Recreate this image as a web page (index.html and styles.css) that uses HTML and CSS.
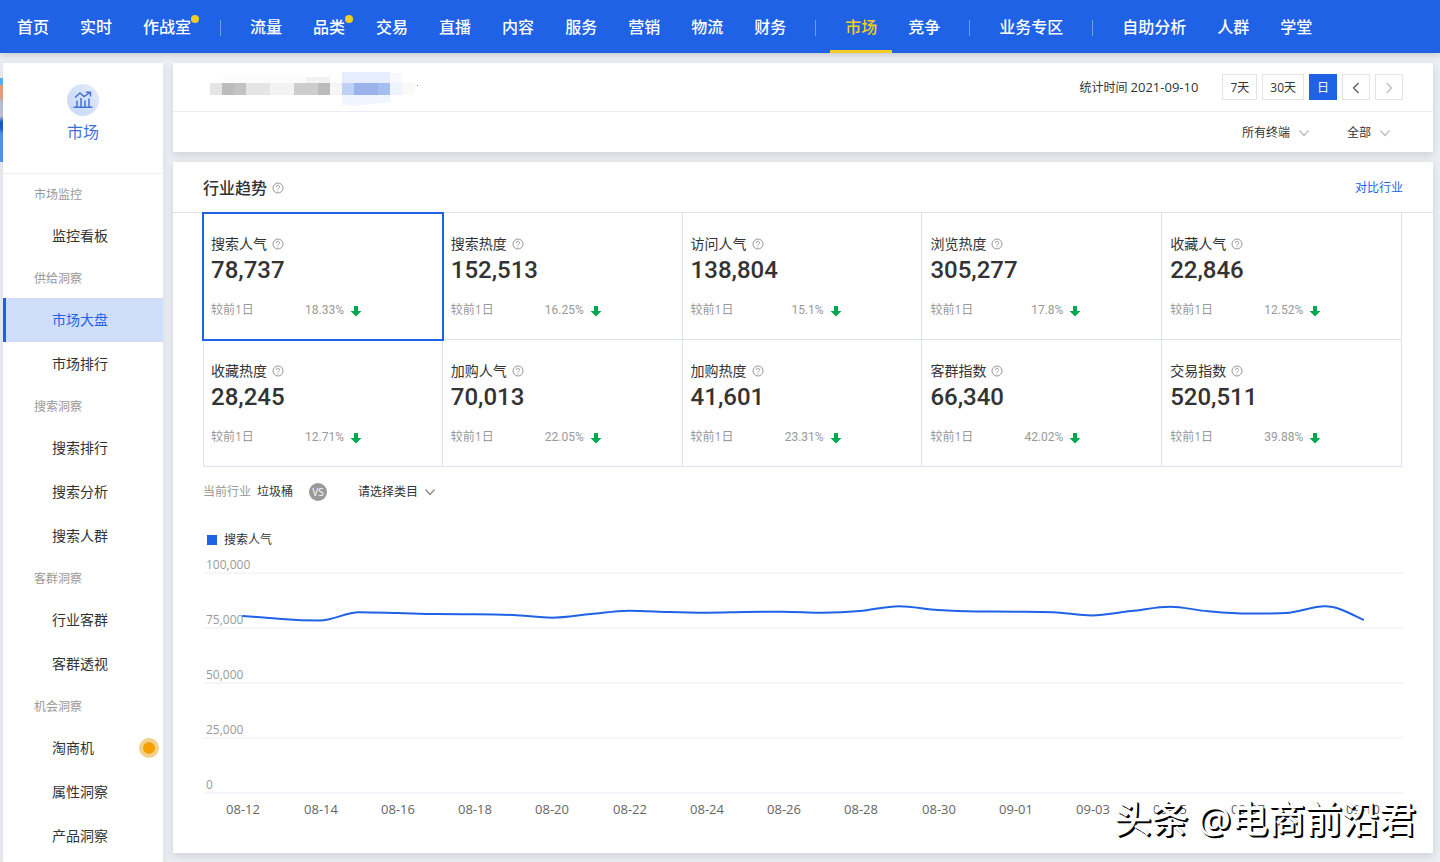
FILE: index.html
```html
<!DOCTYPE html>
<html lang="zh-CN">
<head>
    <meta charset="UTF-8">
    <meta name="viewport" content="width=device-width, initial-scale=1.0">
    <title>市场大盘</title>
    <link rel="stylesheet" href="styles.css">
</head>
<body>
    <!-- Shared icons -->
    <svg class="sprite" aria-hidden="true">
        <symbol id="icon-help" viewBox="0 0 12 12">
            <circle cx="6" cy="6" r="5" fill="none" stroke="currentColor"/>
            <path d="M4.4 4.9a1.6 1.6 0 1 1 2.3 1.4q-.7.4-.7 1.1" fill="none" stroke="currentColor"/>
            <circle cx="6" cy="8.8" r=".6" fill="currentColor"/>
        </symbol>
        <symbol id="icon-down" viewBox="0 0 12 12">
            <path d="M4 1h4v5h3.500L6 11.500.5 6H4z" fill="currentColor"/>
        </symbol>
        <symbol id="icon-chevron" viewBox="0 0 10 10">
            <path d="M.5 2.500 5 7.500l4.500-5" fill="none" stroke="currentColor" stroke-width="1.2"/>
        </symbol>
    </svg>

    <!-- Header -->
    <header class="header">
        <nav class="nav">
            <a href="#">首页</a>
            <a href="#">实时</a>
            <a href="#">作战室<i class="nav-dot"></i></a>
            <span class="nav-line"></span>
            <a href="#">流量</a>
            <a href="#">品类<i class="nav-dot"></i></a>
            <a href="#">交易</a>
            <a href="#">直播</a>
            <a href="#">内容</a>
            <a href="#">服务</a>
            <a href="#">营销</a>
            <a href="#">物流</a>
            <a href="#">财务</a>
            <span class="nav-line"></span>
            <a href="#" class="active">市场</a>
            <a href="#">竞争</a>
            <span class="nav-line"></span>
            <a href="#">业务专区</a>
            <span class="nav-line"></span>
            <a href="#">自助分析</a>
            <a href="#">人群</a>
            <a href="#">学堂</a>
        </nav>
    </header>

    <div class="page">
        <div class="side-banner"></div>

        <!-- Sidebar -->
        <aside class="sidebar">
            <div class="side-head">
                <span class="side-icon">
                    <svg width="20" height="18" viewBox="0 0 20 18" fill="none" stroke="#4672d6" stroke-width="1.5">
                        <path d="M2 6.500 7 2l4 3.500L17 1.500M13 1.200h4.500v4.300"/>
                        <path d="M.5 16.300h19M4 16V9.500M8 16V7M12 16V9.500M16 16V7.500"/>
                    </svg>
                </span>
                <span class="side-title">市场</span>
            </div>
            <h4>市场监控</h4>
            <a href="#">监控看板</a>
            <h4>供给洞察</h4>
            <a href="#" class="active">市场大盘</a>
            <a href="#">市场排行</a>
            <h4>搜索洞察</h4>
            <a href="#">搜索排行</a>
            <a href="#">搜索分析</a>
            <a href="#">搜索人群</a>
            <h4>客群洞察</h4>
            <a href="#">行业客群</a>
            <a href="#">客群透视</a>
            <h4>机会洞察</h4>
            <a href="#">淘商机<i class="side-dot"></i></a>
            <a href="#">属性洞察</a>
            <a href="#">产品洞察</a>
        </aside>

        <main class="main">
            <!-- Filters -->
            <section class="card">
                <div class="filter-top">
                    <svg class="mosaic" width="210" height="40" viewBox="0 0 210 40" shape-rendering="crispEdges">
                        <path d="M12 8h84v8H12z" fill="#fcfcfc"/>
                        <path d="M96 10h24v6H96z" fill="#f2f2f2"/>
                        <path d="M132 5h48v11h-48z" fill="#e6edfe"/>
                        <path d="M180 6h12v10h-12z" fill="#f7f9ff"/>
                        <path d="M0 16h12v12H0z" fill="#e4e4e4"/>
                        <path d="M12 16h12v12H12z" fill="#bcbcbc"/>
                        <path d="M24 16h12v12H24z" fill="#c3c3c3"/>
                        <path d="M36 16h24v12H36z" fill="#e5e5e5"/>
                        <path d="M60 16h24v12H60z" fill="#f3f3f3"/>
                        <path d="M84 16h24v12H84z" fill="#cdcdcd"/>
                        <path d="M108 16h12v12h-12z" fill="#bbbbbb"/>
                        <path d="M120 16h12v12h-12z" fill="#f6f6f8"/>
                        <path d="M132 16h12v12h-12z" fill="#c0d1f8"/>
                        <path d="M144 16h24v12h-24z" fill="#9bb3eb"/>
                        <path d="M168 16h12v12h-12z" fill="#a8bdef"/>
                        <path d="M180 16h12v12h-12z" fill="#edf3ff"/>
                        <path d="M192 16h14l-2 9-3 3h-9z" fill="#f9f9f9"/>
                        <path d="M132 28h48v7l-20 2-16 2-12-1z" fill="#f1f5ff"/>
                        <path d="M207 18h1v1h-1z" fill="#888888"/>
                    </svg>
                    <span class="date">统计时间 <span class="date-value">2021-09-10</span></span>
                    <div class="range">
                        <button type="button">7天</button>
                        <button type="button">30天</button>
                        <button type="button" class="square active">日</button>
                        <button type="button" class="square" aria-label="前一天">
                            <svg width="8" height="12" viewBox="0 0 8 12" fill="none" stroke="#555" stroke-width="1.2"><path d="M6.500 1 1.500 6l5 5"/></svg>
                        </button>
                        <button type="button" class="square" aria-label="后一天" disabled>
                            <svg width="8" height="12" viewBox="0 0 8 12" fill="none" stroke="#bbb" stroke-width="1.2"><path d="m1.500 1 5 5-5 5"/></svg>
                        </button>
                    </div>
                </div>
                <div class="filter-bottom">
                    <div class="select">
                        <select aria-label="终端">
                            <option>所有终端</option>
                        </select>
                        <svg width="10" height="10"><use href="#icon-chevron"/></svg>
                    </div>
                    <div class="select">
                        <select aria-label="范围">
                            <option>全部</option>
                        </select>
                        <svg width="10" height="10"><use href="#icon-chevron"/></svg>
                    </div>
                </div>
            </section>

            <!-- Industry trend -->
            <section class="card trend">
                <div class="trend-head">
                    <h2>行业趋势</h2>
                    <svg class="help" width="12" height="12"><use href="#icon-help"/></svg>
                    <a href="#">对比行业</a>
                </div>

                <div class="metrics">
                    <button type="button" class="metric active">
                        <span class="metric-name">搜索人气<svg class="help" width="12" height="12"><use href="#icon-help"/></svg></span>
                        <span class="metric-value">78,737</span>
                        <span class="compare"><span class="compare-name">较前1日</span><span class="compare-rate">18.33%</span><svg class="down" width="12" height="12"><use href="#icon-down"/></svg></span>
                    </button>
                    <button type="button" class="metric">
                        <span class="metric-name">搜索热度<svg class="help" width="12" height="12"><use href="#icon-help"/></svg></span>
                        <span class="metric-value">152,513</span>
                        <span class="compare"><span class="compare-name">较前1日</span><span class="compare-rate">16.25%</span><svg class="down" width="12" height="12"><use href="#icon-down"/></svg></span>
                    </button>
                    <button type="button" class="metric">
                        <span class="metric-name">访问人气<svg class="help" width="12" height="12"><use href="#icon-help"/></svg></span>
                        <span class="metric-value">138,804</span>
                        <span class="compare"><span class="compare-name">较前1日</span><span class="compare-rate">15.1%</span><svg class="down" width="12" height="12"><use href="#icon-down"/></svg></span>
                    </button>
                    <button type="button" class="metric">
                        <span class="metric-name">浏览热度<svg class="help" width="12" height="12"><use href="#icon-help"/></svg></span>
                        <span class="metric-value">305,277</span>
                        <span class="compare"><span class="compare-name">较前1日</span><span class="compare-rate">17.8%</span><svg class="down" width="12" height="12"><use href="#icon-down"/></svg></span>
                    </button>
                    <button type="button" class="metric">
                        <span class="metric-name">收藏人气<svg class="help" width="12" height="12"><use href="#icon-help"/></svg></span>
                        <span class="metric-value">22,846</span>
                        <span class="compare"><span class="compare-name">较前1日</span><span class="compare-rate">12.52%</span><svg class="down" width="12" height="12"><use href="#icon-down"/></svg></span>
                    </button>
                    <button type="button" class="metric">
                        <span class="metric-name">收藏热度<svg class="help" width="12" height="12"><use href="#icon-help"/></svg></span>
                        <span class="metric-value">28,245</span>
                        <span class="compare"><span class="compare-name">较前1日</span><span class="compare-rate">12.71%</span><svg class="down" width="12" height="12"><use href="#icon-down"/></svg></span>
                    </button>
                    <button type="button" class="metric">
                        <span class="metric-name">加购人气<svg class="help" width="12" height="12"><use href="#icon-help"/></svg></span>
                        <span class="metric-value">70,013</span>
                        <span class="compare"><span class="compare-name">较前1日</span><span class="compare-rate">22.05%</span><svg class="down" width="12" height="12"><use href="#icon-down"/></svg></span>
                    </button>
                    <button type="button" class="metric">
                        <span class="metric-name">加购热度<svg class="help" width="12" height="12"><use href="#icon-help"/></svg></span>
                        <span class="metric-value">41,601</span>
                        <span class="compare"><span class="compare-name">较前1日</span><span class="compare-rate">23.31%</span><svg class="down" width="12" height="12"><use href="#icon-down"/></svg></span>
                    </button>
                    <button type="button" class="metric">
                        <span class="metric-name">客群指数<svg class="help" width="12" height="12"><use href="#icon-help"/></svg></span>
                        <span class="metric-value">66,340</span>
                        <span class="compare"><span class="compare-name">较前1日</span><span class="compare-rate">42.02%</span><svg class="down" width="12" height="12"><use href="#icon-down"/></svg></span>
                    </button>
                    <button type="button" class="metric">
                        <span class="metric-name">交易指数<svg class="help" width="12" height="12"><use href="#icon-help"/></svg></span>
                        <span class="metric-value">520,511</span>
                        <span class="compare"><span class="compare-name">较前1日</span><span class="compare-rate">39.88%</span><svg class="down" width="12" height="12"><use href="#icon-down"/></svg></span>
                    </button>
                </div>

                <div class="versus">
                    <span class="versus-label">当前行业</span>
                    <span>垃圾桶</span>
                    <span class="vs">VS</span>
                    <div class="select">
                        <select aria-label="对比类目">
                            <option>请选择类目</option>
                        </select>
                        <svg width="10" height="10"><use href="#icon-chevron"/></svg>
                    </div>
                </div>

                <div class="legend"><i></i><span>搜索人气</span></div>

                <svg class="chart" viewBox="0 0 1200 270">
                    <path class="grid" d="M1 20h1199M1 75h1199M1 130h1199M1 185h1199M1 240h1199"/>
                    <g class="axis-y">
                        <text x="3" y="16">100,000</text>
                        <text x="3" y="71">75,000</text>
                        <text x="3" y="126">50,000</text>
                        <text x="3" y="181">25,000</text>
                        <text x="3" y="236">0</text>
                    </g>
                    <g class="axis-x">
                        <text x="40" y="261">08-12</text>
                        <text x="118" y="261">08-14</text>
                        <text x="195" y="261">08-16</text>
                        <text x="272" y="261">08-18</text>
                        <text x="349" y="261">08-20</text>
                        <text x="427" y="261">08-22</text>
                        <text x="504" y="261">08-24</text>
                        <text x="581" y="261">08-26</text>
                        <text x="658" y="261">08-28</text>
                        <text x="736" y="261">08-30</text>
                        <text x="813" y="261">09-01</text>
                        <text x="890" y="261">09-03</text>
                        <text x="967" y="261">09-05</text>
                        <text x="1045" y="261">09-07</text>
                        <text x="1160" y="261">09-10</text>
                    </g>
                    <path class="line" d="M40 63C53 64 66 65 79 66S104 67.500 117 67.500S143 59.200 156 59.200S182 59.700 195 60S220 61 233 61S259 61.200 272 61.300S297 61.500 310 62S336 64.700 349 64.700S375 62.200 388 61S413 57.700 426 57.700S452 58.600 465 59S490 59.700 503 59.700S529 59.200 542 59S567 58.700 580 58.700S606 59.700 619 59.700S644 59.200 657 58S683 53.200 696 53.200S722 56.200 735 57S760 58.300 773 58.400S799 58.600 812 58.700S837 58.700 850 59.200S876 62.400 889 62.400S915 59.300 928 58S954 53.700 967 53.700S992 57.200 1005 58.300S1031 60.600 1044 60.600S1070 60.800 1083 60S1109 53.300 1122 53.300S1147 60.500 1160 66.700"/>
                </svg>
            </section>
        </main>
    </div>

    <div class="watermark">头条 @电商前沿君</div>
</body>
</html>
```
FILE: styles.css
```css
* {
    box-sizing: border-box;
}

body {
    margin: 0;
    min-height: 100vh;
    display: flex;
    flex-direction: column;
    position: relative;
    font-family: "Open Sans", "Noto Sans CJK SC", sans-serif;
    font-size: 12px;
    line-height: 20px;
    color: #333;
    background-color: #ebeef3;
}

a {
    color: inherit;
    text-decoration: none;
}

button,
select {
    font: inherit;
    color: inherit;
    background: none;
    border: none;
    padding: 0;
    cursor: pointer;
}

.sprite {
    display: none;
}

/* Header */
.header {
    background-color: #1f62e6;
    box-shadow: 0 2px 6px rgba(0, 0, 0, 0.16);
}

.nav {
    display: flex;
    align-items: center;
    gap: 1px;
    padding-left: 2px;
    font-size: 16px;
    font-weight: 500;
    color: #fff;
}

.nav a {
    position: relative;
    height: 53px;
    padding: 0 15px;
    line-height: 54px;
    white-space: nowrap;
}

.nav a.active {
    color: #f3cd23;
    border-bottom: 3px solid #f3cd23;
}

.nav-line {
    width: 1px;
    height: 16px;
    margin: 2px 13px 0;
    background-color: #6f9bf2;
}

.nav-dot {
    position: absolute;
    top: 15px;
    right: 7px;
    width: 8px;
    height: 8px;
    border-radius: 50%;
    background-color: #f3cd23;
}

/* Layout */
.page {
    flex: 1;
    display: flex;
    padding: 10px 7px 0 0;
}

.side-banner {
    width: 3px;
    height: 84px;
    margin-top: 15px;
    background: linear-gradient(#54b4fb 6px, #f0a07c 8px, #e2a183 20px, #b9bfdf 24px, #c3c4dd 38px, #1f51c8 44px, #2357d2 50px, #5b90f5 56px);
}

.sidebar {
    width: 160px;
    flex-shrink: 0;
    background-color: #fff;
    box-shadow: 0 2px 8px rgba(40, 50, 70, 0.1);
}

.side-head {
    display: flex;
    flex-direction: column;
    align-items: center;
    gap: 4px;
    height: 111px;
    padding-top: 21px;
    border-bottom: 1px solid #ebedf0;
}

.side-icon {
    display: flex;
    align-items: center;
    justify-content: center;
    width: 32px;
    height: 32px;
    border-radius: 50%;
    background: linear-gradient(45deg, #c6d7fa, #e3ebfd);
}

.side-title {
    font-size: 16px;
    line-height: 24px;
    color: #3d6fd9;
}

.sidebar h4 {
    height: 40px;
    margin: 0;
    padding-left: 31px;
    font-size: 12px;
    font-weight: normal;
    line-height: 42px;
    color: #999;
}

.sidebar a {
    display: flex;
    align-items: center;
    justify-content: space-between;
    height: 44px;
    padding: 0 4px 0 46px;
    border-left: 3px solid transparent;
    font-size: 14px;
}

.sidebar a.active {
    color: #1f62e6;
    border-left-color: #1f62e6;
    background-color: #cfdffb;
}

.side-dot {
    width: 20px;
    height: 20px;
    border: 4px solid #f3d08c;
    border-radius: 50%;
    background-color: #f59f00;
}

.main {
    flex: 1;
    min-width: 0;
    display: flex;
    flex-direction: column;
    gap: 10px;
    padding: 0 0 9px 10px;
}

.card {
    background-color: #fff;
    box-shadow: 0 3px 8px rgba(40, 50, 70, 0.15);
}

/* Filters */
.filter-top {
    display: flex;
    align-items: center;
    height: 49px;
    padding: 0 30px 0 37px;
    border-bottom: 1px solid #ebedf0;
}

.date {
    margin-left: auto;
}

.date-value {
    font-size: 13px;
}

.range {
    display: flex;
    gap: 5px;
    margin-left: 24px;
}

.range button {
    display: flex;
    align-items: center;
    justify-content: center;
    height: 26px;
    padding: 1px 7px 0;
    border: 1px solid #e4e4e4;
}

.range .square {
    width: 28px;
}

.range .active {
    color: #fff;
    background-color: #1f62e6;
    border-color: #1f62e6;
}

.filter-bottom {
    display: flex;
    align-items: center;
    justify-content: flex-end;
    gap: 38px;
    height: 40px;
    padding: 2px 43px 0 0;
}

.select {
    position: relative;
    display: flex;
    align-items: center;
}

.select select {
    appearance: none;
    padding-right: 18px;
    line-height: 20px;
}

.select svg {
    position: absolute;
    right: 0;
    color: #bbb;
    pointer-events: none;
}

/* Industry trend */
.trend {
    padding-bottom: 30px;
}

.trend-head {
    display: flex;
    align-items: center;
    gap: 5px;
    height: 51px;
    padding: 1px 30px 0;
    border-bottom: 1px solid #e2e4e8;
}

.trend-head h2 {
    margin: 0;
    font-size: 16px;
    line-height: 24px;
    font-weight: 500;
}

.trend-head a {
    margin-left: auto;
    color: #1f62e6;
}

.help {
    color: #999;
}

.metrics {
    display: grid;
    grid-template-columns: repeat(5, 1fr);
    margin: 0 31px 0 30px;
}

.metric {
    display: flex;
    flex-direction: column;
    padding: 20px 8px 19px;
    border-right: 1px solid #dbe4ec;
    border-bottom: 1px solid #dbe4ec;
    text-align: left;
}

.metric:nth-child(5n + 1) {
    box-shadow: inset 1px 0 0 #dbe4ec;
}

.metric.active {
    position: relative;
    outline: 2px solid #1f62e6;
    outline-offset: -1px;
}

.metric-name {
    display: flex;
    align-items: center;
    gap: 5px;
    font-size: 14px;
    line-height: 22px;
}

.metric-value {
    margin-bottom: 15px;
    font-family: Roboto, sans-serif;
    font-size: 24px;
    font-weight: 500;
    line-height: 30px;
}

.compare {
    display: flex;
    align-items: center;
    color: #999;
}

.compare-name {
    width: 60px;
}

.compare-rate {
    width: 73px;
    font-family: Roboto, sans-serif;
    text-align: right;
}

.down {
    margin: 2px 0 0 6px;
    color: #04a84f;
}

.versus {
    display: flex;
    align-items: center;
    height: 50px;
    padding: 0 30px;
}

.versus-label {
    margin-right: 6px;
    color: #999;
}

.vs {
    width: 18px;
    height: 18px;
    margin: 0 31px 0 16px;
    border-radius: 50%;
    font-size: 10px;
    line-height: 18px;
    text-align: center;
    color: #fff;
    background-color: #999;
}

.versus .select select {
    padding-right: 16px;
}

.versus .select svg {
    color: #888;
}

.legend {
    display: flex;
    align-items: center;
    gap: 7px;
    height: 24px;
    margin: 11px 34px 0;
}

.legend i {
    width: 10px;
    height: 10px;
    background-color: #1f62e6;
}

.legend span {
    line-height: 22px;
}

.chart {
    display: block;
    width: calc(100% - 60px);
    margin: 1px 30px 0;
}

.chart .grid {
    stroke: #f5f6fb;
    stroke-width: 2;
}

.axis-y {
    font-size: 12px;
    fill: #999;
}

.axis-x {
    font-size: 13px;
    fill: #666;
    text-anchor: middle;
}

.line {
    fill: none;
    stroke: #1f62e6;
    stroke-width: 2;
    stroke-linecap: round;
}

.watermark {
    position: absolute;
    right: 24px;
    bottom: 17px;
    font-size: 37px;
    font-weight: 500;
    line-height: 52px;
    color: #fff;
    text-shadow: 1px 1px 0 #000, 2px 2px 0 #000;
    pointer-events: none;
}
```
